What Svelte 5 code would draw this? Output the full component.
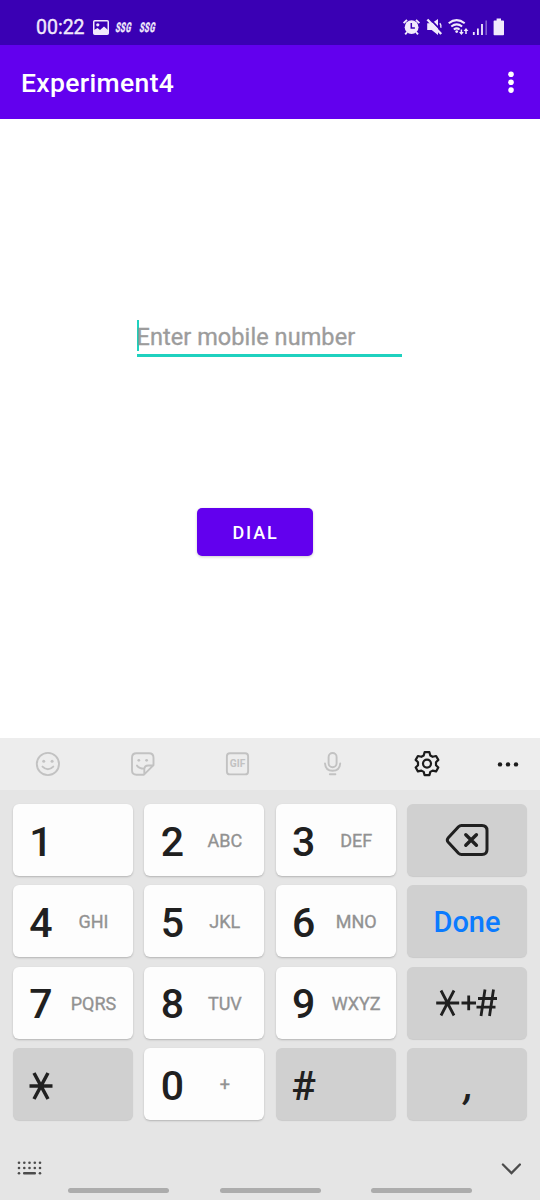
<script>
  const keys = [
    { main: '1' },
    { main: '2', sub: 'ABC' },
    { main: '3', sub: 'DEF' },
    { kind: 'delete', dark: true },
    { main: '4', sub: 'GHI' },
    { main: '5', sub: 'JKL' },
    { main: '6', sub: 'MNO' },
    { kind: 'done', dark: true },
    { main: '7', sub: 'PQRS' },
    { main: '8', sub: 'TUV' },
    { main: '9', sub: 'WXYZ' },
    { kind: 'symbols', dark: true },
    { kind: 'star', dark: true },
    { main: '0', sub: '+' },
    { main: '#', dark: true },
    { kind: 'comma', dark: true }
  ];
</script>

<div class="screen">
  <header class="status">
    <span class="clock">00:22</span>
    <svg class="photo" width="16" height="15" viewBox="0 0 16 15">
      <rect x=".75" y=".75" width="14.5" height="13.5" rx="1" fill="none" stroke="#f1eafc" stroke-width="1.5" />
      <circle cx="4.8" cy="4.8" r="1.6" fill="#f1eafc" />
      <path d="M1 10 4.500 8 7 10 11 6.500 15 10V14H1z" fill="#f1eafc" />
    </svg>
    <span class="ssg"><i>SSG</i></span>
    <span class="ssg"><i>SSG</i></span>
    <span class="grow"></span>
    <svg class="sysicons" width="103" height="20" viewBox="402 16 103 20" fill="none" stroke="#f1eafc">
      <circle cx="411.6" cy="26.2" r="6.9" fill="#f1eafc" stroke="none" />
      <path d="M411.3 22v5h3.6" stroke="#3a00b4" stroke-width="1.5" />
      <path d="M403.6 22.2l3.4-3.4M419.4 22.2l-3.4-3.4M407.2 31l-2 2.4M416 31l2 2.4" stroke-width="1.9" />
      <path d="M427.200 22.300h4.500l6.300-4.300v16l-6.300-5h-4.500z" fill="#f1eafc" stroke="none" />
      <path d="M429.200 17.200l14 14.400" stroke="#3a00b4" stroke-width="1.700" />
      <path d="M427.400 18.500l13.800 14.500" stroke-width="2.400" />
      <path d="M439.800 22.300q1.800 2 1 4.500" stroke-width="1.400" />
      <path d="M448.7 22.3q7.9-6.4 16 0M451.3 25.5q5.4-4.3 10.8 0M453.8 28.5q2.9-2.2 5.8 0" stroke-width="2" />
      <circle cx="456.7" cy="30.6" r="1.4" fill="#f1eafc" stroke="none" />
      <path d="M461.4 28.5v4M466 33v-4.6" stroke-width="1.5" />
      <path d="M459 31h4.800l-2.400 3zM463.600 30h4.800L466 27z" fill="#f1eafc" stroke="none" />
      <path d="M473.8 34v-3M477.9 34v-6.6M482 34V23" stroke-width="1.8" />
      <path d="M486.2 34V19.5" stroke-width="1.6" opacity=".4" />
      <path d="M494.4 19.500h2.200v-2h4.400v2h2.200q.8 0 .8.8v13.100q0 .8-.8.8h-8.800q-.8 0-.8-.8V20.300q0-.8.8-.8z" fill="#f1eafc" stroke="none" />
    </svg>
  </header>

  <div class="appbar">
    <h1>Experiment4</h1>
    <svg width="8" height="24" viewBox="0 0 8 24" fill="#fff">
      <circle cx="4" cy="4.300" r="2.800" /><circle cx="4" cy="12.200" r="2.800" /><circle cx="4" cy="20.100" r="2.800" />
    </svg>
  </div>

  <main>
    <div class="field"><span class="caret"></span><span class="hint">Enter mobile number</span></div>
    <button class="dial">DIAL</button>
  </main>

  <div class="tools">
    <svg width="540" height="52" viewBox="0 738 540 52" fill="none" stroke="#c2c2c2" stroke-width="1.900" stroke-linecap="round" stroke-linejoin="round">
      <circle cx="47.900" cy="764" r="11.100" />
      <path d="M42.500 766.600q5.400 5.400 10.800 0" />
      <circle cx="43.700" cy="761.200" r="1.500" fill="#c2c2c2" stroke="none" />
      <circle cx="52.100" cy="761.200" r="1.500" fill="#c2c2c2" stroke="none" />
      <path d="M144 774.700h-7.500q-4.500 0-4.500-4.500v-12.500q0-4.500 4.500-4.500h12.500q4.500 0 4.500 4.500v7.500zM144.300 774v-4.500q0-4 4-4h5" />
      <path d="M137 765.600q2.200 3 7 3" />
      <circle cx="138.800" cy="760.300" r="1.400" fill="#c2c2c2" stroke="none" />
      <circle cx="146.600" cy="760.300" r="1.400" fill="#c2c2c2" stroke="none" />
      <rect x="226.900" y="753.200" width="21.200" height="21.200" rx="3" />
      <text x="237.500" y="767.300" text-anchor="middle" textLength="15.500" lengthAdjust="spacingAndGlyphs">GIF</text>
      <rect x="328.600" y="753" width="8" height="14.300" rx="4" />
      <path d="M325 763.500q.5 7.300 7.600 7.300t7.600-7.300M329.800 774.200h5.600" />
      <g stroke="#1c1c1c" stroke-width="2.200">
        <path d="M424.600 752.200h4.800l.9 3.300 2.300 1.300 3.500-.8 2.200 3.900-2.300 2.300v3l2.300 2.300-2.200 3.900-3.500-.8-2.300 1.300-.9 3.300h-4.800l-.9-3.300-2.300-1.300-3.500.8-2.200-3.900 2.300-2.300v-3l-2.300-2.300 2.200-3.900 3.500.8 2.300-1.300z" />
        <circle cx="427" cy="763.600" r="4" />
      </g>
      <g fill="#1c1c1c" stroke="none">
        <circle cx="500" cy="764.400" r="2.200" /><circle cx="508" cy="764.400" r="2.200" /><circle cx="516" cy="764.400" r="2.200" />
      </g>
    </svg>
  </div>

  <section class="keyboard">
    <div class="keys">
      {#each keys as key}
        <div class="key" class:dark={key.dark}>
          {#if key.main}
            <span class="main">{key.main}</span>
            {#if key.sub}<span class="sub">{key.sub}</span>{/if}
          {:else if key.kind === 'delete'}
            <svg class="center" width="44" height="34" viewBox="0 0 44 34" fill="none" stroke="#202020" stroke-width="3" stroke-linecap="round" stroke-linejoin="round">
              <path d="M16.500 2.500H37q5 0 5 5v19q0 5-5 5H16.500q-1.800 0-3-1.200L3.300 19.300q-2-2.300 0-4.600L13.500 3.700q1.200-1.200 3-1.200z" />
              <path d="M20.800 11.700l10.600 10.600M31.400 11.700l-10.600 10.600" stroke-width="3.400" />
            </svg>
          {:else if key.kind === 'done'}
            <span class="center done">Done</span>
          {:else if key.kind === 'symbols'}
            <svg class="center" width="64" height="30" viewBox="0 0 64 30" fill="none" stroke="#202020" stroke-width="2.800">
              <path d="M1.200 15h23M6 2.500l13 25M19 2.500l-13 25M26.500 15h14.500M33.700 7.500v14.700" />
              <path d="M43 10.500h19M41.500 19.200h19M50 1.500l-4 26.500M58.500 1.500l-4 26.500" />
            </svg>
          {:else if key.kind === 'star'}
            <svg class="star" width="24" height="28" viewBox="0 0 24 28" fill="none" stroke="#202020" stroke-width="3.500">
              <path d="M.5 14h23M5 1l14 26M19 1L5 27" />
            </svg>
          {:else}
            <span class="center comma">,</span>
          {/if}
        </div>
      {/each}
    </div>

    <div class="bottom">
      <svg width="26" height="15" viewBox="0 0 26 15" fill="#4c4c4c">
        {#each [2, 7.3, 12.5, 17.800, 23] as x}
          <circle cx={x} cy="1.800" r="1.300" /><circle cx={x} cy="7" r="1.300" />
        {/each}
        <circle cx="2" cy="12.300" r="1.300" /><circle cx="23" cy="12.300" r="1.300" />
        <rect x="6" y="11" width="13" height="2.600" rx="1" />
      </svg>
      <svg width="20" height="12" viewBox="0 0 20 12" fill="none" stroke="#4c4c4c" stroke-width="2.300" stroke-linecap="round">
        <path d="M1.900 1.500l8.600 8.600 8.400-8.600" />
      </svg>
    </div>
    <div class="nav"><span></span><span></span><span></span></div>
  </section>
</div>

<style>
  :global(body) { margin: 0; }
  .screen {
    width: 540px; height: 1200px; overflow: hidden;
    display: flex; flex-direction: column;
    background: #fff; font-family: Roboto, sans-serif;
  }
  .status {
    height: 45px; box-sizing: border-box; padding: 9px 35px 0 36px;
    display: flex; align-items: center; background: #3a00b4; color: #f1eafc;
  }
  .clock { width: 57px; font-size: 19.500px; line-height: 36px; padding-top: 1px; -webkit-text-stroke: .35px; }
  .photo { margin-right: 7px; }
  .ssg { width: 23.5px; font-size: 13.500px; font-weight: 800; line-height: 36px; }
  .ssg i { display: inline-block; font-style: normal; letter-spacing: .8px; transform: scaleX(.56) skewX(-20deg); transform-origin: left; -webkit-text-stroke: .3px; }
  .grow { flex: 1; }
  .appbar {
    height: 74px; box-sizing: border-box; padding: 0 25px 0 21px;
    display: flex; align-items: center; justify-content: space-between;
    background: #6200ee; color: #fff;
  }
  h1 { margin: 2px 0 0; font-size: 26.500px; font-weight: 500; line-height: 32px; letter-spacing: .35px; }
  main { height: 619px; display: flex; flex-direction: column; }
  .field {
    width: 265px; height: 37.500px; margin: 200px 0 0 136.500px;
    display: flex; align-items: flex-start; box-sizing: border-box; border-bottom: 3px solid #1fd1bf;
  }
  .caret { width: 2.500px; height: 31px; margin: 1px -2.500px 0 0; background: #1fd1bf; }
  .hint { font-size: 23.500px; line-height: 35px; letter-spacing: .07px; color: #9c9c9c; padding-top: 1px; -webkit-text-stroke: .35px; }
  .dial {
    width: 116px; height: 48px; margin: 151.500px 0 0 197px; padding: 1px 0 0 1px;
    border: 0; border-radius: 5px; background: #6200ee; color: #fff;
    font: 500 18px Roboto, sans-serif; letter-spacing: 1.800px;
    box-shadow: 0 1px 3px rgba(0, 0, 0, .2);
  }
  .tools { height: 52px; background: #ededed; }
  .tools svg { display: block; }
  .tools text { font: 700 10.500px Roboto, sans-serif; fill: #c2c2c2; stroke: none; }
  .keyboard { flex: 1; background: #e5e5e5; }
  .keys {
    padding: 14px 13px 0; display: grid;
    grid-template-columns: repeat(4, 120px); justify-content: space-between;
    grid-auto-rows: 72px; row-gap: 9.400px;
  }
  .key {
    display: flex; align-items: center; border-radius: 6px; background: #fdfdfd;
    color: #202020; box-shadow: 0 1px 2px rgba(0, 0, 0, .22);
  }
  .key.dark { background: #d0d0d0; box-shadow: 0 1px 1px rgba(0, 0, 0, .12); }
  .main { width: 56px; text-align: center; font-size: 41px; font-weight: 500; line-height: 72px; padding-top: 3px; }
  .sub { width: 49px; text-align: center; font-size: 18px; color: #929292; padding-top: 1px; -webkit-text-stroke: .35px; }
  .center { margin: 0 auto; }
  .done { font-size: 29px; font-weight: 500; color: #0b7bff; padding-top: 2px; }
  .comma { font-size: 41px; font-weight: 500; font-style: italic; padding: 2px 0 0 4px; }
  .star { margin: 3px 0 0 16px; }
  .bottom {
    height: 15px; margin: 41px 19.500px 0 17px;
    display: flex; align-items: center; justify-content: space-between;
  }
  .nav { display: flex; justify-content: space-between; padding: 12px 68px 0; }
  .nav span { width: 101px; height: 4.500px; border-radius: 3px; background: #acacac; }
</style>
